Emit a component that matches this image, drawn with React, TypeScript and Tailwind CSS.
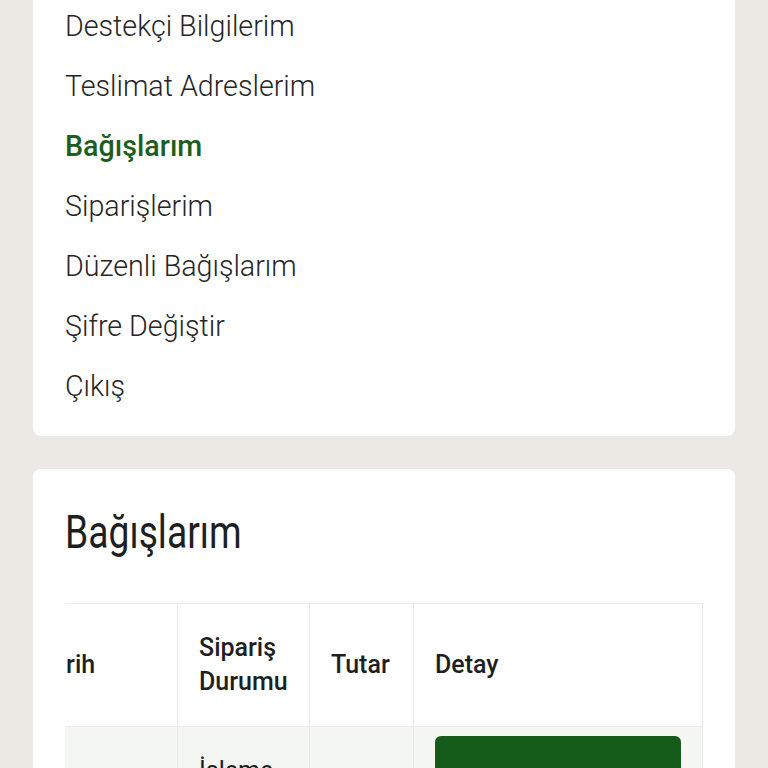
import { useLayoutEffect, useRef } from "react";

const menu = [
  { label: "Destekçi Bilgilerim" },
  { label: "Teslimat Adreslerim" },
  { label: "Bağışlarım", active: true },
  { label: "Siparişlerim" },
  { label: "Düzenli Bağışlarım" },
  { label: "Şifre Değiştir" },
  { label: "Çıkış" },
];

const cell = "border border-[#ececec] px-[21px] py-[27px] align-middle leading-[34px]";

export default function App() {
  const scroller = useRef<HTMLDivElement>(null);

  useLayoutEffect(() => {
    const el = scroller.current;
    if (el) el.scrollLeft = el.scrollWidth;
  }, []);

  return (
    <div
      className="min-h-screen bg-[#ece8e4] px-[33px] pb-10 flex flex-col gap-[33px] overflow-hidden"
      style={{ fontFamily: "Roboto, 'Noto Sans', sans-serif" }}
    >
      {/* account navigation */}
      <nav className="-mt-[30px] bg-white rounded-lg px-8 pt-[26px] pb-[20px] flex flex-col">
        {menu.map((m) => (
          <a
            key={m.label}
            href="#"
            className={`h-[60px] flex items-center text-[30px] leading-[36px] ${
              m.active ? "text-[#1d5e1f] font-medium" : "text-[#262626] font-light"
            }`}
          >
            <span className="inline-block origin-left scale-x-[0.955] whitespace-nowrap">{m.label}</span>
          </a>
        ))}
      </nav>

      {/* donations list */}
      <section className="bg-white rounded-lg px-8 pt-[36px] pb-10">
        <h1 className="text-[46px] leading-[55px] font-normal text-[#1f1f1f] mb-[43px]">
          <span className="inline-block origin-left scale-x-[0.81] whitespace-nowrap">Bağışlarım</span>
        </h1>

        <div ref={scroller} className="overflow-x-auto [scrollbar-width:none]">
          <table className="table-fixed border-collapse w-[865px] text-[25px] text-[#1f1f1f]">
            <colgroup>
              <col className="w-[180px]" />
              <col className="w-[160px]" />
              <col className="w-[132px]" />
              <col className="w-[104px]" />
              <col className="w-[289px]" />
            </colgroup>
            <thead>
              <tr>
                {["Sipariş No", "Tarih", "Sipariş Durumu", "Tutar", "Detay"].map((h) => (
                  <th key={h} className={`${cell} text-left font-medium`}>
                    {h}
                  </th>
                ))}
              </tr>
            </thead>
            <tbody>
              <tr className="bg-[#f3f6f1]">
                <td className={`${cell} whitespace-nowrap`}>#10482</td>
                <td className={`${cell} whitespace-nowrap`}>12.03.2024</td>
                <td className={cell}>İşleme Alındı</td>
                <td className={`${cell} whitespace-nowrap`}>₺250</td>
                <td className="border border-[#ececec] px-[21px] pt-[9px] pb-[13px] align-middle">
                  <button className="w-full h-[100px] rounded-md bg-[#155b1a] text-white text-[22px] font-medium">
                    Detay
                  </button>
                </td>
              </tr>
            </tbody>
          </table>
        </div>
      </section>
    </div>
  );
}
